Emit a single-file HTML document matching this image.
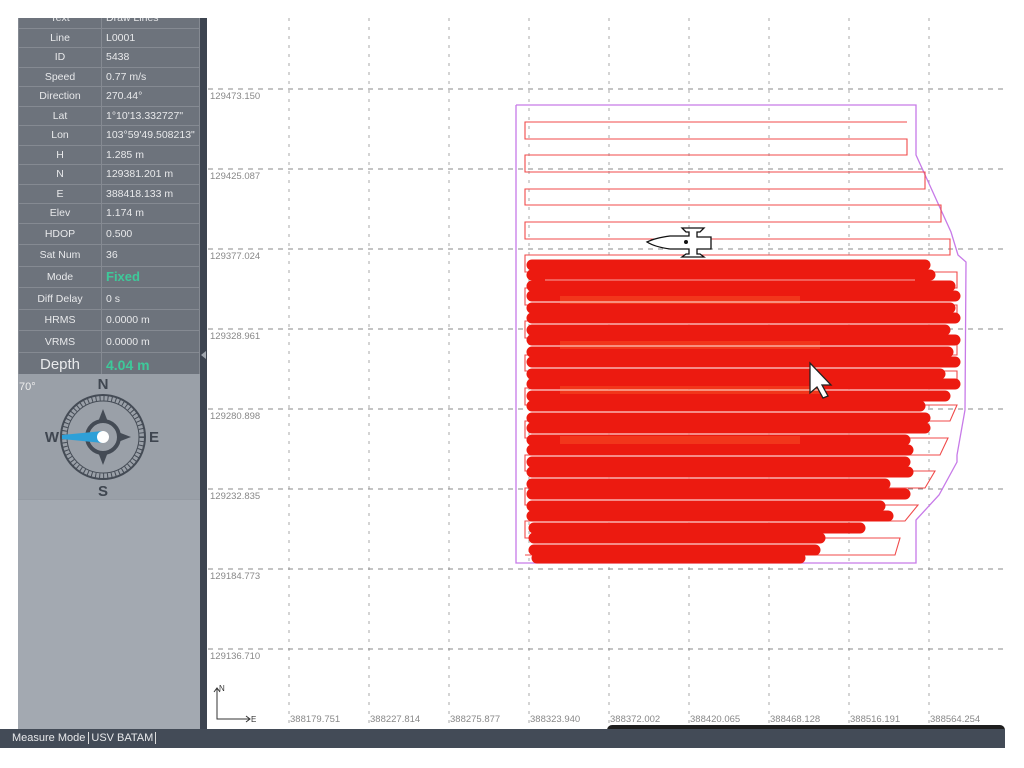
<!DOCTYPE html>
<html><head><meta charset="utf-8"><style>
*{margin:0;padding:0;box-sizing:border-box}
body{width:1024px;height:768px;background:#fff;position:relative;overflow:hidden;font-family:"Liberation Sans",sans-serif}
#panel{position:absolute;left:18px;top:0;width:182px;height:730px;background:#a3a9b1;overflow:hidden}
#strip{position:absolute;left:200px;top:0;width:7px;height:730px;background:#3d4450}
#top{position:absolute;left:0;top:0;width:1024px;height:18px;background:#fff}
table{border-collapse:collapse;width:182px;position:absolute;top:8px;left:0}
td{background:#6d737c;color:#e8e9eb;font-size:10.5px;border:1px solid #858a92;height:19.5px;padding:0}
td.l{width:83px;text-align:center}
td.v{padding-left:4px}
tr.b td{height:21.6px}
#bar{position:absolute;left:0;top:729px;width:1005px;height:19px;background:#434b57;color:#e8e9eb;font-size:11px;line-height:19px}
</style></head><body>
<div id="panel">
<table>
<tr><td class="l">Text</td><td class="v">Draw Lines</td></tr>
<tr><td class="l">Line</td><td class="v">L0001</td></tr>
<tr><td class="l">ID</td><td class="v">5438</td></tr>
<tr><td class="l">Speed</td><td class="v">0.77 m/s</td></tr>
<tr><td class="l">Direction</td><td class="v">270.44°</td></tr>
<tr><td class="l">Lat</td><td class="v">1°10'13.332727"</td></tr>
<tr><td class="l">Lon</td><td class="v">103°59'49.508213"</td></tr>
<tr><td class="l">H</td><td class="v">1.285 m</td></tr>
<tr><td class="l">N</td><td class="v">129381.201 m</td></tr>
<tr><td class="l">E</td><td class="v">388418.133 m</td></tr>
<tr><td class="l">Elev</td><td class="v">1.174 m</td></tr>
<tr class="b"><td class="l">HDOP</td><td class="v">0.500</td></tr>
<tr class="b"><td class="l">Sat Num</td><td class="v">36</td></tr>
<tr class="b"><td class="l">Mode</td><td class="v" style="color:#3ec99a;font-weight:bold;font-size:13px">Fixed</td></tr>
<tr class="b"><td class="l">Diff Delay</td><td class="v">0 s</td></tr>
<tr class="b"><td class="l">HRMS</td><td class="v">0.0000 m</td></tr>
<tr class="b"><td class="l">VRMS</td><td class="v">0.0000 m</td></tr>
<tr class="b"><td class="l" style="font-size:15px;height:24px">Depth</td><td class="v" style="color:#3ec99a;font-weight:bold;font-size:14px">4.04 m</td></tr>
</table>
<div style="position:absolute;left:0;top:374px;width:182px;height:126px;background:#9aa0a8;border-bottom:1px solid #959ba3"></div>
</div>
<div id="strip"></div>
<svg style="position:absolute;left:0;top:0" width="1024" height="768">
<text x="19" y="390" font-size="11" fill="#eee" font-family="Liberation Sans">70°</text>
<g stroke="#444b55" fill="none">
<circle cx="103" cy="437" r="42" stroke-width="2"/>
<circle cx="103" cy="437" r="36" stroke-width="1"/>
<circle cx="103" cy="437" r="39" stroke-width="5" stroke-dasharray="1 3" />
<circle cx="103" cy="437" r="16" stroke-width="4"/>
</g>
<g fill="#444b55">
<polygon points="103,409 98,422 108,422"/><polygon points="103,465 98,452 108,452"/>
<polygon points="131,437 118,432 118,442"/><polygon points="75,437 88,432 88,442"/>
</g>
<polygon points="62,435 103,431 103,443 62,439" fill="#2ea0d8"/>
<circle cx="103" cy="437" r="6" fill="#fff"/>
<g font-family="Liberation Sans" font-size="15" font-weight="bold" fill="#3f4650" text-anchor="middle">
<text x="103" y="389">N</text><text x="103" y="496">S</text><text x="52" y="442">W</text><text x="154" y="442">E</text></g>
<polygon points="206,351 201,355 206,359" fill="#a0a6ae"/>
<g stroke="#a8a8a8" stroke-width="1" stroke-dasharray="3 6">
<line x1="289" y1="18" x2="289" y2="728"/><line x1="369" y1="18" x2="369" y2="728"/><line x1="449" y1="18" x2="449" y2="728"/><line x1="529" y1="18" x2="529" y2="728"/><line x1="609" y1="18" x2="609" y2="728"/><line x1="689" y1="18" x2="689" y2="728"/><line x1="769" y1="18" x2="769" y2="728"/><line x1="849" y1="18" x2="849" y2="728"/><line x1="929" y1="18" x2="929" y2="728"/>
</g>
<g stroke="#8a8a8a" stroke-width="1" stroke-dasharray="5 5">
<line x1="208" y1="89" x2="1005" y2="89"/><line x1="208" y1="169" x2="1005" y2="169"/><line x1="208" y1="249" x2="1005" y2="249"/><line x1="208" y1="329" x2="1005" y2="329"/><line x1="208" y1="409" x2="1005" y2="409"/><line x1="208" y1="489" x2="1005" y2="489"/><line x1="208" y1="569" x2="1005" y2="569"/><line x1="208" y1="649" x2="1005" y2="649"/>
</g>
<g font-family="Liberation Sans" font-size="9.5" fill="#888">
<text x="210" y="99">129473.150</text><text x="210" y="179">129425.087</text><text x="210" y="259">129377.024</text><text x="210" y="339">129328.961</text><text x="210" y="419">129280.898</text><text x="210" y="499">129232.835</text><text x="210" y="579">129184.773</text><text x="210" y="659">129136.710</text>
<text x="290" y="722">388179.751</text><text x="370" y="722">388227.814</text><text x="450" y="722">388275.877</text><text x="530" y="722">388323.940</text><text x="610" y="722">388372.002</text><text x="690" y="722">388420.065</text><text x="770" y="722">388468.128</text><text x="850" y="722">388516.191</text><text x="930" y="722">388564.254</text>
</g>
<g stroke="#333" fill="none" stroke-width="1"><path d="M217 688 V719 H250 M246 716 L250 719 L246 722 M214 692 L217 688 L220 692"/></g>
<text x="251" y="722" font-size="8" fill="#333" font-family="Liberation Sans">E</text><text x="219" y="691" font-size="8" fill="#333" font-family="Liberation Sans">N</text>
<polyline points="516,105 916,105 916,155 951,232 958,255 966,262 965,410 957,455 957,462 939,495 916,520 916,563 516,563 516,105" fill="none" stroke="#c77ae8" stroke-width="1.3"/>
<path d="M907 122 H525 V139 H907 V155 H525 V172 H925 V189 H525 V205 H941 V222 H525 V239 H950 V255 H525 V272 H957 V288 H525 V305 H957 V321 H525 V338 H957 V355 H525 V371 H957 V388 H525 V405 H957 L950 421 H525 V438 H948 L940 455 H525 V471 H935 L925 488 H525 V505 H918 L905 521 H525 V538 H900 L895 555 H525" fill="none" stroke="#f04a4a" stroke-width="1.1"/>
<g stroke="#ec1a10" stroke-width="11" stroke-linecap="round" fill="none">
<line x1="532" y1="265" x2="925" y2="265"/><line x1="532" y1="275" x2="930" y2="275"/><line x1="532" y1="286" x2="950" y2="286"/><line x1="532" y1="296" x2="955" y2="296"/>
<line x1="532" y1="308" x2="950" y2="308"/><line x1="532" y1="318" x2="955" y2="318"/><line x1="532" y1="330" x2="945" y2="330"/><line x1="532" y1="340" x2="955" y2="340"/>
<line x1="532" y1="352" x2="948" y2="352"/><line x1="532" y1="362" x2="955" y2="362"/><line x1="532" y1="374" x2="940" y2="374"/><line x1="532" y1="384" x2="955" y2="384"/>
<line x1="532" y1="396" x2="945" y2="396"/><line x1="532" y1="406" x2="920" y2="406"/><line x1="532" y1="418" x2="925" y2="418"/><line x1="532" y1="428" x2="925" y2="428"/>
<line x1="532" y1="440" x2="905" y2="440"/><line x1="532" y1="450" x2="908" y2="450"/><line x1="532" y1="462" x2="905" y2="462"/><line x1="532" y1="472" x2="908" y2="472"/>
<line x1="532" y1="484" x2="885" y2="484"/><line x1="532" y1="494" x2="905" y2="494"/><line x1="532" y1="506" x2="880" y2="506"/><line x1="532" y1="516" x2="888" y2="516"/>
<line x1="534" y1="528" x2="860" y2="528"/><line x1="534" y1="538" x2="820" y2="538"/><line x1="534" y1="550" x2="815" y2="550"/><line x1="537" y1="558" x2="800" y2="558"/>
</g>
<g stroke="#ff6a30" stroke-width="8" opacity="0.35"><line x1="560" y1="300" x2="800" y2="300"/><line x1="560" y1="345" x2="820" y2="345"/><line x1="560" y1="390" x2="820" y2="390"/><line x1="560" y1="440" x2="800" y2="440"/></g>
<g stroke="#fff" stroke-width="1" opacity="0.6">
<line x1="545" y1="280" x2="915" y2="280"/><line x1="545" y1="302" x2="935" y2="302"/><line x1="545" y1="324" x2="935" y2="324"/><line x1="545" y1="346" x2="935" y2="346"/><line x1="545" y1="368" x2="935" y2="368"/><line x1="545" y1="390" x2="935" y2="390"/><line x1="545" y1="412" x2="900" y2="412"/><line x1="545" y1="434" x2="905" y2="434"/><line x1="545" y1="456" x2="890" y2="456"/><line x1="545" y1="478" x2="890" y2="478"/><line x1="545" y1="500" x2="870" y2="500"/><line x1="545" y1="522" x2="845" y2="522"/><line x1="545" y1="544" x2="800" y2="544"/>
</g>
<g stroke="#111" stroke-width="1.3" fill="#fff">
<path d="M682 228 H704 L700 232 H697 V237 H711 V249 H697 V254 H700 L704 257 H682 L686 254 H689 V249 H670 Q655 247 647 242 Q655 238 670 236 H689 V232 H686 Z"/>
</g>
<circle cx="686" cy="242" r="2" fill="#111"/>
<path d="M810 363 V393 L817 387 L823 398 L828 396 L822 385 L831 385 Z" fill="#fff" stroke="#222" stroke-width="1.3"/>
<rect x="607" y="725" width="398" height="10" rx="5" fill="#1e1e1e"/>
</svg>
<div id="bar"><span style="margin-left:12px">Measure Mode</span><span style="border-left:1.5px solid #ddd;border-right:1.5px solid #ddd;padding:0 2px;margin-left:3px">USV BATAM</span></div>
<div id="top"></div>
</body></html>
